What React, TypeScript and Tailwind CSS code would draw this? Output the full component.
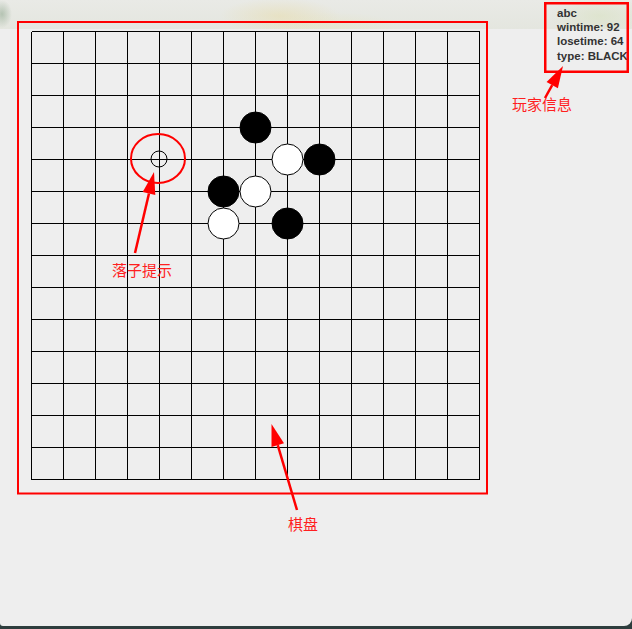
import React from "react";

const CELL = 32;
const LINES = 15;

type Stone = { x: number; y: number; color: "black" | "white" };

const stones: Stone[] = [
  { x: 7, y: 3, color: "black" },
  { x: 8, y: 4, color: "white" },
  { x: 9, y: 4, color: "black" },
  { x: 6, y: 5, color: "black" },
  { x: 7, y: 5, color: "white" },
  { x: 6, y: 6, color: "white" },
  { x: 8, y: 6, color: "black" },
];

const pos = (i: number) => 1.5 + i * CELL;

const Board = () => {
  const end = pos(LINES - 1);
  return (
    <svg width={450} height={450} className="block shrink-0">
      {Array.from({ length: LINES }).map((_, i) => (
        <g key={i} shapeRendering="crispEdges">
          <line x1={pos(0)} y1={pos(i)} x2={end} y2={pos(i)} stroke="#000" strokeWidth={1} />
          <line x1={pos(i)} y1={pos(0)} x2={pos(i)} y2={end} stroke="#000" strokeWidth={1} />
        </g>
      ))}
      {stones.map((s, i) => (
        <circle
          key={i}
          cx={pos(s.x)}
          cy={pos(s.y)}
          r={15.5}
          fill={s.color === "black" ? "#000" : "#fff"}
          stroke="#000"
          strokeWidth={1}
        />
      ))}
      {/* hint for next move */}
      <circle cx={pos(4) - 0.5} cy={pos(4) - 0.5} r={8} fill="none" stroke="#000" strokeWidth={1} />
    </svg>
  );
};

const Arrow = ({ tail, tip }: { tail: [number, number]; tip: [number, number] }) => {
  const dx = tip[0] - tail[0];
  const dy = tip[1] - tail[1];
  const len = Math.hypot(dx, dy);
  const ux = dx / len;
  const uy = dy / len;
  const bx = tip[0] - ux * 22;
  const by = tip[1] - uy * 22;
  const px = -uy * 6.5;
  const py = ux * 6.5;
  return (
    <g>
      <line x1={tail[0]} y1={tail[1]} x2={bx} y2={by} stroke="#ff0000" strokeWidth={2.5} />
      <polygon
        points={`${tip[0]},${tip[1]} ${bx + px},${by + py} ${bx - px},${by - py}`}
        fill="#ff0000"
      />
    </g>
  );
};

const labelClass =
  "absolute text-[15px] leading-[15px] text-[#ff1f1f] font-['Noto_Sans_CJK_SC','Noto_Sans',sans-serif] whitespace-nowrap";

export default function App() {
  return (
    <div className="w-[632px] h-[629px] bg-[#2d3d3d] overflow-hidden">
      <div className="relative h-[626px] rounded-br-[8px] rounded-bl-[3px] bg-[#eeeeee] bg-no-repeat bg-[length:100%_29px] bg-[image:radial-gradient(ellipse_60px_18px_at_280px_16px,rgba(232,218,160,0.45),transparent),radial-gradient(ellipse_70px_14px_at_330px_26px,rgba(230,228,190,0.45),transparent),radial-gradient(ellipse_10px_14px_at_2px_14px,rgba(120,150,120,0.45),transparent),radial-gradient(ellipse_50px_20px_at_600px_16px,rgba(215,225,190,0.55),transparent),linear-gradient(to_bottom,#e9eae6,#e4e6df)]">
        <div className="flex items-start">
          <div className="ml-[30px] mt-[30px]">
            <Board />
          </div>
          <div className="ml-[77px] mt-[6px] text-[11.5px] leading-[14px] text-[#333333] font-['Liberation_Sans',Arial,sans-serif] font-bold whitespace-nowrap">
            <div>abc</div>
            <div>wintime: 92</div>
            <div>losetime: 64</div>
            <div className="mt-[1px]">type: BLACK</div>
          </div>
        </div>

        {/* annotations */}
        <svg className="absolute inset-0 pointer-events-none" width={632} height={626}>
          <rect x={18} y={22} width={469} height={471.5} fill="none" stroke="#ff0000" strokeWidth={2} />
          <rect x={545.25} y={3.25} width={82.5} height={68.5} fill="none" stroke="#ff0000" strokeWidth={2.5} />
          <ellipse cx={158} cy={158.5} rx={27} ry={24.5} fill="none" stroke="#ff0000" strokeWidth={2} />
          <Arrow tail={[135, 253]} tip={[154, 172]} />
          <Arrow tail={[545, 98]} tip={[563, 66]} />
          <Arrow tail={[297, 510]} tip={[271.5, 424]} />
        </svg>
        <span className={labelClass} style={{ left: 112, top: 262 }}>落子提示</span>
        <span className={labelClass} style={{ left: 512, top: 96 }}>玩家信息</span>
        <span className={labelClass} style={{ left: 288, top: 516 }}>棋盘</span>
      </div>
    </div>
  );
}
